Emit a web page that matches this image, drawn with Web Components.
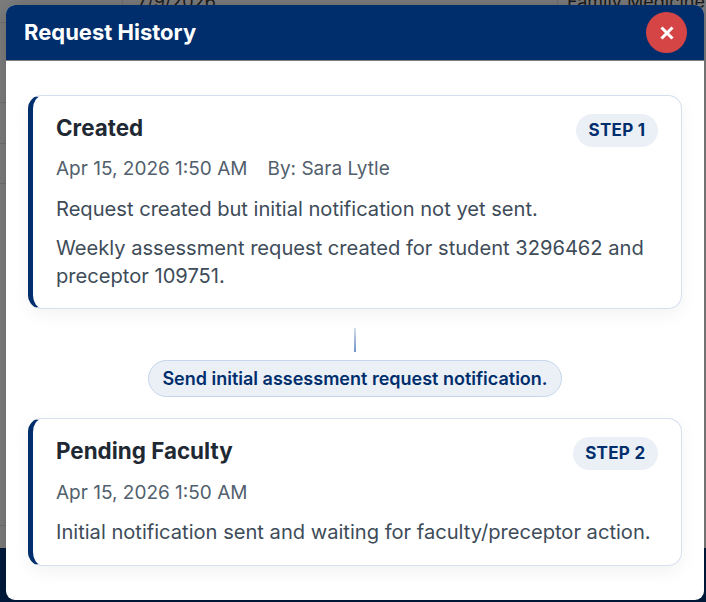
<!DOCTYPE html>
<html>
<head>
<meta charset="utf-8">
<title>Request History</title>
<style>
	html, body {
		margin: 0;
		height: 100%;
		overflow: hidden;
	}
	body {
		font-family: Inter, "Liberation Sans", sans-serif;
	}
</style>
</head>
<body>
<page-backdrop>
	<history-dialog heading="Request History">
		<history-card title="Created" step="STEP 1" when="Apr 15, 2026 1:50 AM" by="By: Sara Lytle">
			<p>Request created but initial notification not yet sent.</p>
			<p>Weekly assessment request created for student 3296462 and preceptor 109751.</p>
		</history-card>
		<history-link>Send initial assessment request notification.</history-link>
		<history-card title="Pending Faculty" step="STEP 2" when="Apr 15, 2026 1:50 AM">
			<p>Initial notification sent and waiting for faculty/preceptor action.</p>
		</history-card>
	</history-dialog>
</page-backdrop>

<script>
class PageBackdrop extends HTMLElement {
	constructor() {
		super();
		this.attachShadow({ mode: "open" });
		this.shadowRoot.innerHTML = `
			<style>
				:host {
					display: block;
					position: relative;
					width: 706px;
					height: 602px;
					overflow: hidden;
					background: #7f7f7f;
				}
				.under {
					position: absolute;
					left: 0;
					right: 0;
					top: -9px;
					height: 22px;
					color: #1a1a1a;
					font: 18px/22px Inter, sans-serif;
				}
				.under span {
					position: absolute;
					top: 0;
					white-space: nowrap;
				}
				.footer {
					position: absolute;
					left: 0;
					right: 0;
					bottom: 0;
					height: 54px;
					background: #011a3c;
				}
				.line {
					position: absolute;
					background: #727272;
				}
				.dialog {
					position: absolute;
					left: 6px;
					top: 5px;
					width: 698px;
					height: 595px;
					border-radius: 9px;
					box-shadow: 0 0 24px rgba(0, 0, 0, 0.22);
				}
			</style>
			<div class="line" style="left:0;width:6px;top:22px;height:1px"></div>
			<div class="line" style="left:0;width:6px;top:102px;height:1px"></div>
			<div class="line" style="left:0;width:6px;top:143px;height:1px"></div>
			<div class="line" style="left:0;width:6px;top:183px;height:1px"></div>
			<div class="line" style="left:0;width:6px;top:525px;height:1px"></div>
			<div class="line" style="left:122px;width:1px;top:0;height:5px"></div>
			<div class="line" style="left:557px;width:1px;top:0;height:5px"></div>
			<div class="under">
				<span style="left:137px">7/9/2026</span>
				<span style="left:567px">Family Medicine</span>
			</div>
			<div class="footer"></div>
			<div class="dialog"><slot></slot></div>
		`;
	}
}

class HistoryDialog extends HTMLElement {
	static observedAttributes = ["heading"];

	constructor() {
		super();
		this.attachShadow({ mode: "open" });
		this.shadowRoot.innerHTML = `
			<style>
				:host {
					display: flex;
					flex-direction: column;
					height: 100%;
					background: #fff;
					border-radius: 9px;
					overflow: hidden;
				}
				header {
					display: flex;
					align-items: center;
					justify-content: space-between;
					height: 55px;
					flex: none;
					padding: 0 17px 0 18px;
					background: #002e6d;
					border-bottom: 1px solid #808080;
				}
				h2 {
					margin: 0 0 2px;
					color: #fff;
					font-size: 22px;
					font-weight: 700;
				}
				button {
					display: flex;
					align-items: center;
					justify-content: center;
					width: 41px;
					height: 41px;
					padding: 0;
					border: 0;
					border-radius: 50%;
					background: #d64545;
				}
				main {
					display: flex;
					flex-direction: column;
					padding: 34px 22px 0;
				}
			</style>
			<header>
				<h2></h2>
				<button aria-label="Close">
					<svg width="14" height="14" viewBox="0 0 14 14">
						<path d="M1.5 1.5l11 11M12.5 1.5l-11 11" stroke="#fff" stroke-width="3" fill="none"/>
					</svg>
				</button>
			</header>
			<main><slot></slot></main>
		`;
	}

	attributeChangedCallback(name, oldValue, newValue) {
		this.shadowRoot.querySelector("h2").textContent = newValue;
	}
}

class HistoryCard extends HTMLElement {
	constructor() {
		super();
		this.attachShadow({ mode: "open" });
		this.shadowRoot.innerHTML = `
			<style>
				:host {
					display: block;
					background: #fff;
					border: 1px solid #d5dfee;
					border-left: 5px solid #002e6d;
					border-radius: 14px;
					box-shadow: 0 6px 18px rgba(0, 0, 0, 0.05);
					padding: 18px 23px 17.5px 23px;
				}
				.top {
					display: flex;
					justify-content: space-between;
					align-items: flex-start;
				}
				h3 {
					margin: 0;
					color: #1f2933;
					font-size: 22.4px;
					font-weight: 700;
					line-height: 28px;
				}
				.step {
					background: #ebf0f7;
					color: #002e6d;
					font-size: 17px;
					font-weight: 700;
					letter-spacing: 0.3px;
					line-height: 21px;
					padding: 6px 12.5px;
					border-radius: 999px;
				}
				.meta {
					display: flex;
					gap: 20px;
					margin-top: 10.3px;
					color: #52606d;
					font-size: 19px;
					line-height: 24px;
				}
				.body {
					margin-top: 14.8px;
					color: #3e4c59;
					font-size: 20.13px;
					line-height: 27.6px;
				}
				::slotted(p) {
					margin: 0 0 11.8px;
				}
				::slotted(p:last-child) {
					margin-bottom: 0;
				}
			</style>
			<div class="top"><h3></h3><span class="step"></span></div>
			<div class="meta"><span class="when"></span><span class="by"></span></div>
			<div class="body"><slot></slot></div>
		`;
	}

	connectedCallback() {
		this.shadowRoot.querySelector("h3").textContent = this.getAttribute("title");
		this.shadowRoot.querySelector(".step").textContent = this.getAttribute("step");
		this.shadowRoot.querySelector(".when").textContent = this.getAttribute("when");
		this.shadowRoot.querySelector(".by").textContent = this.getAttribute("by") || "";
	}
}

class HistoryLink extends HTMLElement {
	constructor() {
		super();
		this.attachShadow({ mode: "open" });
		this.shadowRoot.innerHTML = `
			<style>
				:host {
					display: flex;
					flex-direction: column;
					align-items: center;
					padding: 19px 0 21.2px;
				}
				.line {
					width: 2px;
					height: 24px;
					background: linear-gradient(#d5dfee, #6f93c6);
				}
				.pill {
					margin-top: 8px;
					padding: 7px 13px;
					background: #ebf0f7;
					border: 1px solid #c6d5ea;
					border-radius: 999px;
					color: #002e6d;
					font-size: 18px;
					font-weight: 600;
					line-height: 21px;
				}
			</style>
			<div class="line"></div>
			<div class="pill"><slot></slot></div>
		`;
	}
}

customElements.define("page-backdrop", PageBackdrop);
customElements.define("history-dialog", HistoryDialog);
customElements.define("history-card", HistoryCard);
customElements.define("history-link", HistoryLink);
</script>
</body>
</html>
